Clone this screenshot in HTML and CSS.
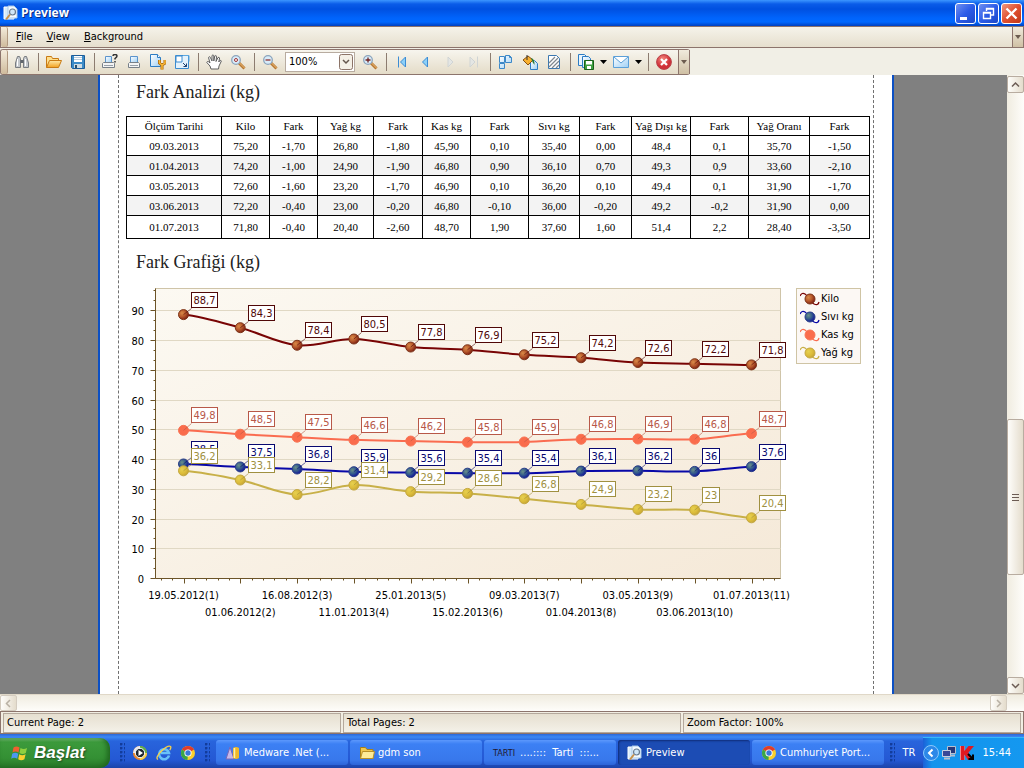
FILE: index.html
```html
<!DOCTYPE html>
<html lang="tr">
<head>
	<meta charset="UTF-8">
	<title>Preview</title>
<link rel="stylesheet" href="styles.css">
</head>
<body>
<svg class="defs" width="0" height="0">
	<defs>
		<linearGradient id="gBlue" x1="0" y1="0" x2="1" y2="1"><stop offset="0" stop-color="#fff"/><stop offset="1" stop-color="#9fd0f5"/></linearGradient>
		<linearGradient id="gFold" x1="0" y1="0" x2="0" y2="1"><stop offset="0" stop-color="#ffe9a8"/><stop offset="1" stop-color="#f2a01e"/></linearGradient>
		<radialGradient id="gRed" cx="0.4" cy="0.3"><stop offset="0" stop-color="#f58a80"/><stop offset="1" stop-color="#d03038"/></radialGradient>
		<radialGradient id="mKilo" cx="0.35" cy="0.35" r="0.7"><stop offset="0" stop-color="#d88a48"/><stop offset="0.5" stop-color="#b85a2c"/><stop offset="1" stop-color="#7a1c10"/></radialGradient>
		<radialGradient id="mSivi" cx="0.35" cy="0.35" r="0.7"><stop offset="0" stop-color="#6a9088"/><stop offset="0.5" stop-color="#345c8c"/><stop offset="1" stop-color="#10109a"/></radialGradient>
		<radialGradient id="mKas"><stop offset="0" stop-color="#fa6c4c"/><stop offset="1" stop-color="#fa6c4c"/></radialGradient>
		<radialGradient id="mYag" cx="0.35" cy="0.35" r="0.7"><stop offset="0" stop-color="#e6d050"/><stop offset="0.6" stop-color="#dcbc3a"/><stop offset="1" stop-color="#c4a438"/></radialGradient>
	</defs>
	<symbol id="preview" viewBox="0 0 16 16">
		<path d="M1 2h8l2 2v10H1z" fill="#d8ecfa" stroke="#fff"/>
		<path d="M5 1h6l3 3v9H5z" fill="#f4faff" stroke="#a8c8e8"/>
		<circle cx="9.500" cy="7" r="3" fill="#cfe6f8" stroke="#6a7c90" stroke-width="1.200"/>
		<path d="M7 9.500l-4 5" stroke="#c89048" stroke-width="2"/>
	</symbol>
	<symbol id="chrome" viewBox="0 0 16 16">
		<circle cx="8" cy="8" r="7" fill="#f8cf2c"/>
		<path d="M8 8L1.900 4.500A7 7 0 0 1 14.100 4.500z" fill="#e03c2c"/>
		<path d="M8 8L1.900 4.500A7 7 0 0 0 7.500 15z" fill="#3aa648"/>
		<circle cx="8" cy="8" r="3.600" fill="#fff"/>
		<circle cx="8" cy="8" r="2.700" fill="#3a78d8"/>
	</symbol>
</svg>

<div class="titlebar">
	<svg class="ico" viewBox="0 0 16 16"><use href="#preview"/></svg>
	<h1>Preview</h1>
	<button class="win" aria-label="Minimize"><svg viewBox="0 0 19 19"><path d="M4 13h7v3H4z" fill="#fff"/></svg></button>
	<button class="win" aria-label="Restore"><svg viewBox="0 0 19 19"><path d="M7.500 7V4.500h7V11H12M7 5h8M4.500 8.500h7v6h-7zM4 9h8" fill="none" stroke="#fff" stroke-width="1.400"/></svg></button>
	<button class="win close" aria-label="Close"><svg viewBox="0 0 19 19"><path d="M4.500 4.500l10 10M14.500 4.500l-10 10" stroke="#fff" stroke-width="2.400"/></svg></button>
</div>

<div class="menubar">
	<span class="grip"></span>
	<button><u>F</u>ile</button>
	<button><u>V</u>iew</button>
	<button><u>B</u>ackground</button>
	<button class="more" aria-label="Menu options"><i class="down"></i></button>
</div>

<div class="toolrow">
<div class="toolbar">
	<span class="grip"></span>
	<button class="tool" aria-label="Search"><svg viewBox="0 0 16 16"><path d="M3.500 2.500h2l1 2v9h-5V9zM12.500 2.500h-2l-1 2v9h5V9z" fill="#c4c8cc" stroke="#787c80"/><path d="M6.500 6h3v3h-3z" fill="#60666c"/><path d="M3.500 5v7M11.500 5v7" stroke="#fff"/></svg></button>
	<span class="sep"></span>
	<button class="tool" aria-label="Open"><svg viewBox="0 0 16 16"><path d="M.5 13.500v-11h5l1 2h6v3" fill="#ffdf8c" stroke="#c87a14"/><path d="M.5 13.500l3-7h12l-3 7z" fill="url(#gFold)" stroke="#c87a14"/></svg></button>
	<button class="tool" aria-label="Save"><svg viewBox="0 0 16 16"><path d="M1.500 1.500h13v13h-12l-1-1z" fill="#3c8cc8" stroke="#1c5c98"/><path d="M4 2h8v6H4z" fill="#fff"/><path d="M4 3.500h8M4 5.500h8" stroke="#b8ccdc"/><path d="M4 10h8v4H4z" fill="#cfdce4"/><path d="M5 11h2v3H5z" fill="#28506c"/></svg></button>
	<span class="sep"></span>
	<button class="tool" aria-label="Print"><svg viewBox="0 0 16 16"><path d="M3.500 8.500v-6h6v6" fill="url(#gBlue)" stroke="#5c94cc"/><path d="M1.500 8.500h10l1 1v4h-12v-4z" fill="#f4f4f4" stroke="#788088"/><path d="M2 11.500h9" stroke="#98a0a8"/><path d="M11 2q0-1.500 2-1.500t2 1.500q0 1-2 2.500v1M13 7v1.500" fill="none" stroke="#333" stroke-width="1.500"/></svg></button>
	<button class="tool" aria-label="Quick print"><svg viewBox="0 0 16 16"><path d="M4.500 8.500v-6h7v6" fill="url(#gBlue)" stroke="#5c94cc"/><path d="M3.500 8.500h9l1 1v4h-11v-4z" fill="#f4f4f4" stroke="#788088"/><path d="M4 11.500h8" stroke="#98a0a8"/></svg></button>
	<button class="tool" aria-label="Page setup"><svg viewBox="0 0 16 16"><path d="M.5.5h7l3 3v9H.5z" fill="url(#gBlue)" stroke="#2c7cc4"/><path d="M7.500.5v3h3" fill="#fff" stroke="#2c7cc4"/><path d="M9.500 6v3l2.500 2 3-2V6M12 11v4.500" fill="none" stroke="#a86408" stroke-width="3"/><path d="M9.500 6v3l2.500 2 3-2V6M12 11v4.500" fill="none" stroke="#f8b838" stroke-width="1.500"/></svg></button>
	<button class="tool" aria-label="Scale"><svg viewBox="0 0 16 16"><path d="M1.500 1.500h13v13h-13z" fill="#e4f2fc" stroke="#3c8cd0"/><path d="M2 2h6v6H2z" fill="#fff" stroke="#3c8cd0"/><path d="M9 1.500h6v6" fill="none" stroke="#5ca8e0"/><path d="M9 9l3.500 3.500M12.500 9.500v3h-3" fill="none" stroke="#1c4070"/></svg></button>
	<span class="sep"></span>
	<button class="tool" aria-label="Hand tool"><svg viewBox="0 0 16 16"><path d="M5 15l-1-3L.8 8.500q.2-1.500 1.800-.8L4 9 2.500 3.500q.5-1.500 1.800-.2L6 7V1.500q1-1.200 1.800 0V7l1-5q1.200-1 1.800.2L10 7.500l2-4q1.200-.6 1.600.5L12.800 8l1-1.500q1.200-.5 1.600.5L13 12l-.5 3z" fill="#fff" stroke="#606060"/></svg></button>
	<button class="tool" aria-label="Magnifier"><svg viewBox="0 0 16 16"><path d="M9 9l5.500 5.500" stroke="#b87830" stroke-width="3"/><path d="M9.500 9l5 5" stroke="#f0c080"/><circle cx="6" cy="6" r="4.300" fill="#d8ecfa" stroke="#8ca4bc" stroke-width="1.300"/><circle cx="6" cy="6" r="1.500" fill="#fff" stroke="#a03030"/></svg></button>
	<span class="sep"></span>
	<button class="tool" aria-label="Zoom out"><svg viewBox="0 0 16 16"><path d="M9 9l5.500 5.500" stroke="#b87830" stroke-width="3"/><path d="M9.500 9l5 5" stroke="#f0c080"/><circle cx="6" cy="6" r="4.300" fill="#d8ecfa" stroke="#8ca4bc" stroke-width="1.300"/><path d="M3.500 6h5" stroke="#903030" stroke-width="1.300"/></svg></button>
	<label class="zoom"><select aria-label="Zoom"><option>100%</option></select><svg viewBox="0 0 14 16"><rect x=".5" y=".5" width="13" height="15" rx="2" fill="#f4f0e6" stroke="#8c7468"/><path d="M4 6l3 3 3-3" fill="none" stroke="#64564c" stroke-width="1.500"/></svg></label>
	<button class="tool" aria-label="Zoom in"><svg viewBox="0 0 16 16"><path d="M9 9l5.500 5.500" stroke="#b87830" stroke-width="3"/><path d="M9.500 9l5 5" stroke="#f0c080"/><circle cx="6" cy="6" r="4.300" fill="#d8ecfa" stroke="#8ca4bc" stroke-width="1.300"/><path d="M3.500 6h5M6 3.500v5" stroke="#702020" stroke-width="1.300"/></svg></button>
	<span class="sep"></span>
	<button class="tool" aria-label="First page"><svg viewBox="0 0 16 16"><path d="M4.500 2.500v11M11.500 3v10L6.500 8z" fill="#8cd0f8" stroke="#3c8cd4"/></svg></button>
	<button class="tool" aria-label="Previous page"><svg viewBox="0 0 16 16"><path d="M9.500 3v10l-5-5z" fill="#8cd0f8" stroke="#3c8cd4"/></svg></button>
	<button class="tool" aria-label="Next page" disabled><svg viewBox="0 0 16 16"><path d="M6 3v10l5-5z" fill="#e4e6e4" stroke="#d0d4d4"/></svg></button>
	<button class="tool" aria-label="Last page" disabled><svg viewBox="0 0 16 16"><path d="M4 3v10l5-5zM11.500 2.500v11" fill="#e4e6e4" stroke="#d0d4d4"/></svg></button>
	<span class="sep"></span>
	<button class="tool" aria-label="Multiple pages"><svg viewBox="0 0 16 16"><path d="M1.500 9.500v5h5v-5zM1.500 2.500h5v6h-5zM7.500 1.500h4l2 2v5h-6z" fill="url(#gBlue)" stroke="#3c88c8"/><path d="M11.500 1.500v2h2" fill="none" stroke="#3c88c8"/></svg></button>
	<button class="tool" aria-label="Background color"><svg viewBox="0 0 16 16"><path d="M8.500 6.500h4l3 3v6h-7z" fill="url(#gBlue)" stroke="#2c7cc4"/><path d="M1 6l5-4 5 4-5 5z" fill="#f8b030" stroke="#885010"/><path d="M5 1v5" stroke="#333"/><path d="M9 4q4 1 3.500 7Q10 8 9 4z" fill="#287838"/></svg></button>
	<button class="tool" aria-label="Watermark"><svg viewBox="0 0 16 16"><path d="M2.500 1.500h8l3 3v10h-11z" fill="#fff" stroke="#3c78b0"/><path d="M3 9l6-6M3 13l9-9M6 14l7-7M10 14l3-3" stroke="#80888f" stroke-width="1.200"/></svg></button>
	<span class="sep"></span>
	<button class="tool" aria-label="Export"><svg viewBox="0 0 16 16"><path d="M.5.500h6l2 2v9h-8z" fill="#e8f4fc" stroke="#2c7cc4"/><path d="M4.500 2.500h6l2 2v9h-8z" fill="url(#gBlue)" stroke="#2c7cc4"/><path d="M6.500 6.500h9v9h-9z" fill="#40a040" stroke="#186018"/><path d="M8 7h6v3.500H8zM9 12h4v3H9z" fill="#fff"/></svg></button>
	<button class="drop" aria-label="Export options"><i class="down"></i></button>
	<button class="tool" aria-label="E-mail"><svg viewBox="0 0 16 16"><path d="M.5 2.500h15v11H.5z" fill="url(#gBlue)" stroke="#5ca0d8"/><path d="M1 3l7 6 7-6" fill="#fff" stroke="#5ca0d8"/></svg></button>
	<button class="drop" aria-label="E-mail options"><i class="down"></i></button>
	<span class="sep"></span>
	<button class="tool" aria-label="Exit"><svg viewBox="0 0 16 16"><circle cx="8" cy="8" r="7.400" fill="url(#gRed)" stroke="#b84048"/><path d="M5 5l6 6M11 5l-6 6" stroke="#fff" stroke-width="2.200"/></svg></button>
	<button class="more" aria-label="Toolbar options"><i class="down"></i></button>
</div>
</div>

<div class="viewer">
	<div class="canvas">
		<div class="paper">
		<div class="area">
			<h2>Fark Analizi (kg)</h2>
			<table>
				<colgroup><col class="w95"><col class="w48"><col class="w48"><col class="w56"><col class="w49"><col class="w48"><col class="w58"><col class="w51"><col class="w52"><col class="w59"><col class="w58"><col class="w61"><col class="w60"></colgroup>
				<thead>
				<tr><th>Ölçüm Tarihi</th><th>Kilo</th><th>Fark</th><th>Yağ kg</th><th>Fark</th><th>Kas kg</th><th>Fark</th><th>Sıvı kg</th><th>Fark</th><th>Yağ Dışı kg</th><th>Fark</th><th>Yağ Oranı</th><th>Fark</th></tr>
				</thead>
				<tbody>
				<tr><td>09.03.2013</td><td>75,20</td><td>-1,70</td><td>26,80</td><td>-1,80</td><td>45,90</td><td>0,10</td><td>35,40</td><td>0,00</td><td>48,4</td><td>0,1</td><td>35,70</td><td>-1,50</td></tr>
				<tr><td>01.04.2013</td><td>74,20</td><td>-1,00</td><td>24,90</td><td>-1,90</td><td>46,80</td><td>0,90</td><td>36,10</td><td>0,70</td><td>49,3</td><td>0,9</td><td>33,60</td><td>-2,10</td></tr>
				<tr><td>03.05.2013</td><td>72,60</td><td>-1,60</td><td>23,20</td><td>-1,70</td><td>46,90</td><td>0,10</td><td>36,20</td><td>0,10</td><td>49,4</td><td>0,1</td><td>31,90</td><td>-1,70</td></tr>
				<tr><td>03.06.2013</td><td>72,20</td><td>-0,40</td><td>23,00</td><td>-0,20</td><td>46,80</td><td>-0,10</td><td>36,00</td><td>-0,20</td><td>49,2</td><td>-0,2</td><td>31,90</td><td>0,00</td></tr>
				<tr><td>01.07.2013</td><td>71,80</td><td>-0,40</td><td>20,40</td><td>-2,60</td><td>48,70</td><td>1,90</td><td>37,60</td><td>1,60</td><td>51,4</td><td>2,2</td><td>28,40</td><td>-3,50</td></tr>
				</tbody>
			</table>
			<h2>Fark Grafiği (kg)</h2>
			<div class="graph">
				<svg id="chart" viewBox="0 0 664 338"></svg>
				<ul id="legend"></ul>
			</div>
		</div>
		</div>
	</div>
	<div class="vscroll">
		<button aria-label="Scroll up"><svg viewBox="0 0 9 9"><path d="M1 6.500L4.500 3 8 6.500"/></svg></button>
		<span></span>
		<button class="thumb" aria-label="Scroll position"><svg viewBox="0 0 9 9"><path d="M1 1.500h7M1 4.500h7M1 7.500h7"/></svg></button>
		<span></span>
		<button aria-label="Scroll down"><svg viewBox="0 0 9 9"><path d="M1 3l3.500 3.500L8 3"/></svg></button>
	</div>
</div>
<div class="hscroll">
	<button aria-label="Scroll left" disabled><svg viewBox="0 0 9 9"><path d="M6 1L2.500 4.500 6 8"/></svg></button>
	<button aria-label="Scroll right" disabled><svg viewBox="0 0 9 9"><path d="M3 1l3.500 3.500L3 8"/></svg></button>
</div>

<div class="status">
	<p>Current Page: 2</p>
	<p>Total Pages: 2</p>
	<p>Zoom Factor: 100%</p>
</div>

<div class="taskbar">
	<button class="start">
		<svg viewBox="0 0 18 18"><path d="M2.500 3.500q3-2 6 0L7.500 8.500q-3-2-6 0z" fill="#f06030"/><path d="M9.500 4q3 2 6.500 0l-1.200 5q-3.300 2-6.300 0z" fill="#90d040"/><path d="M1.200 9.700q3-2 6 0L6.200 14.700q-3-2-6 0z" fill="#4c98f0"/><path d="M8.200 10.200q3 2 6.400 0l-1.200 5q-3.200 2-6.200 0z" fill="#fcd030"/></svg>
		Başlat
	</button>
	<span class="dots"></span>
	<div class="quick">
		<button aria-label="Media Player"><svg viewBox="0 0 16 16"><circle cx="8" cy="8" r="7" fill="#f08828"/><path d="M8 1a7 7 0 0 1 7 7H8z" fill="#58b048"/><path d="M1 8a7 7 0 0 1 7-7v7z" fill="#e8e8f0"/><path d="M15 8a7 7 0 0 1-7 7V8z" fill="#f8d048"/><circle cx="8" cy="8" r="4.700" fill="#202830" stroke="#fff"/><path d="M6.500 5v6l4.500-3z" fill="#fff"/></svg></button>
		<button aria-label="Internet Explorer"><svg viewBox="0 0 16 16"><path d="M13 10.500A5 5 0 1 1 13 8H5" fill="none" stroke="#68c0f8" stroke-width="2.600"/><path d="M2 14.500Q-1 13 5 6.500 12 0 14.500 1.500q1 1-.8 3.500" fill="none" stroke="#f8d048" stroke-width="1.300"/></svg></button>
		<button aria-label="Chrome"><svg viewBox="0 0 16 16"><use href="#chrome"/></svg></button>
	</div>
	<span class="dots"></span>
	<div class="tasks">
		<button class="task"><svg viewBox="0 0 16 16"><path d="M1 14L5 2l4 12z" fill="#c8b8e8" stroke="#7868b8"/><path d="M8 3q3-2 6 0v10q-3 2-6 0z" fill="#f0b828"/><path d="M9.500 3v10" stroke="#fff0a8" stroke-width="1.500"/></svg>Medware .Net (...</button>
		<button class="task"><svg viewBox="0 0 16 16"><path d="M1.500 13.500v-11h5l1.500 2h6v9z" fill="#f0c850" stroke="#a88018"/><path d="M1.500 13.500l2-7h12l-1.500 7z" fill="#fdeb98" stroke="#b89028"/></svg>gdm son</button>
		<button class="task"><span class="tarti">TARTI</span>....::::&nbsp; Tarti &nbsp;:::...</button>
		<button class="task active"><svg viewBox="0 0 16 16"><use href="#preview"/></svg>Preview</button>
		<button class="task"><svg viewBox="0 0 16 16"><use href="#chrome"/></svg>Cumhuriyet Port...</button>
	</div>
	<span class="dots"></span>
	<button class="lang">TR</button>
	<div class="tray">
		<button class="hide" aria-label="Hide icons"><svg viewBox="0 0 16 16"><circle cx="8" cy="8" r="7.500" fill="#2c88e8" stroke="#8cc8fc"/><path d="M9.500 4.500L6 8l3.500 3.500" fill="none" stroke="#fff" stroke-width="2"/></svg></button>
		<svg class="ico" viewBox="0 0 16 16"><path d="M6.500 1.500h8v7h-8z" fill="#283878" stroke="#b8c0d0"/><path d="M1.500 5.500h8v6h-8z" fill="#384898" stroke="#c8d0e0"/><path d="M3 13.500h6M9 10.500h5" stroke="#b8c0d0" stroke-width="2"/></svg>
		<svg class="ico" viewBox="0 0 16 16"><path d="M1 1h4.500v14H1z" fill="#fff"/><path d="M1.500 1h4v5l4-5H15L9.500 7.500 13 15H9L5.500 9.500V15h-4z" fill="#e01820"/><path d="M9 9l4 4M14 9.500V14H9.500" fill="none" stroke="#000" stroke-width="2"/></svg>
		<time>15:44</time>
	</div>
</div>
<script src="chart.js"></script>
</body>
</html>
```

FILE: styles.css
```css
*{margin:0;padding:0;box-sizing:border-box;list-style:none;}
body{display:flex;flex-direction:column;height:100vh;overflow:hidden;background:#f1efe6;color:#000;font:11px/14px "DejaVu Sans Condensed","DejaVu Sans",sans-serif;}
button{border:0;background:none;color:inherit;font:inherit;}
svg{display:block;}
.defs{position:absolute;}
.ico{width:16px;height:16px;flex:none;}

.titlebar{display:flex;align-items:center;gap:2px;flex:none;height:26px;padding:0 2px 0 3px;background:linear-gradient(#3c96ff,#0a5ce8 4px,#0050e0 9px,#0064fc 18px,#0068ff 22px,#0040c0);}
.titlebar h1{flex:1;color:#fff;font:bold 12px/18px "Open Sans",sans-serif;text-shadow:1px 1px #0a2c80;}
.win{width:21px;height:21px;border:1px solid #fff;border-radius:3px;background:linear-gradient(135deg,#7090f0,#2c5ce8 50%,#1c48c8);}
.close{background:linear-gradient(135deg,#f09880,#e05030 50%,#c03818);}

.menubar{display:flex;flex:none;height:22px;border:1px solid #8c746c;border-width:1px 0 1px 1px;background:linear-gradient(#f5f3ea,#e6dfce);}
.menubar button{height:20px;margin-right:14px;}
.grip{flex:none;width:7px;margin-right:8px;border-right:1px solid #b09880;border-radius:2px;background:linear-gradient(#f4ecdc,#cfbb9c);}
.menubar .more,.toolbar .more{width:12px;height:auto;margin:0 0 0 auto;border-left:1px solid #8c746c;border-right:1px solid #8c746c;background:linear-gradient(#f0eadc,#cfc0a4);}
.down{display:block;width:7px;height:4px;margin:auto;background:#000;clip-path:polygon(0 0,100% 0,50% 100%);}
.more .down{width:6px;background:#6c5c50;}

.toolrow{flex:none;height:27px;padding-top:1px;}
.toolbar{display:flex;align-items:center;width:690px;height:26px;border:1px solid #8c746c;border-right:0;border-radius:3px;background:linear-gradient(#f7f5ee,#e4dcc8);}
.toolbar .grip{align-self:stretch;margin-right:2px;}
.tool{flex:none;width:24px;height:22px;padding:3px 4px;}
.tool svg{width:16px;height:16px;}
.sep{flex:none;width:1px;height:18px;margin:0 3px 0 4px;background:#8c7c70;}
.drop{flex:none;width:11px;height:22px;}
.zoom{position:relative;flex:none;width:70px;height:20px;margin:0 3px;}
.zoom select{width:100%;height:20px;padding-left:3px;border:1px solid #b8aca0;border-radius:0;background:#fff;color:#000;font:inherit;appearance:none;}
.zoom svg{position:absolute;top:2px;right:2px;width:14px;height:16px;pointer-events:none;}
.toolbar .more{align-self:stretch;}

.viewer{display:flex;flex:1;min-height:0;}
.canvas{display:flex;flex:1;overflow:hidden;padding:0 113px 0 98px;background:#808080;}
.paper{flex:1;padding:0 18px;border:2px solid #0c50c4;border-width:0 2px;background:#fff;}
.area{display:flex;flex-direction:column;height:100%;padding:0 3px 0 7px;border:1px dashed #707070;border-width:0 1px;}
h2{margin:11px 0 12px 10px;color:#222;font:18px/24px "Liberation Serif",serif;}
.area h2:first-child{margin-top:5px;}

table{width:100%;table-layout:fixed;border-collapse:collapse;font:11px/14px "Liberation Serif",serif;text-align:center;}
th,td{height:20px;border:1px solid #000;white-space:nowrap;}
th{height:19px;font-weight:normal;}
tbody tr:nth-child(even){background:#f3f3f3;}
tbody tr:last-child td{height:23px;}
.w95{width:95px;}
.w61{width:61px;}
.w60{width:60px;}
.w59{width:59px;}
.w58{width:58px;}
.w56{width:56px;}
.w52{width:52px;}
.w51{width:51px;}
.w49{width:49px;}
.w48{width:48px;}

.graph{display:flex;align-items:flex-start;gap:6px;padding-right:9px;}
#chart{flex:1;min-width:0;}
#chart text{font-size:11px;}
.end{text-anchor:end;}
.mid{text-anchor:middle;}
#legend{width:65px;margin-top:2px;padding:1px 3px;border:1px solid #cfc4a4;background:#fcf8f4;}
#legend li{display:flex;align-items:center;height:18px;white-space:nowrap;}
#legend svg{flex:none;width:20px;height:16px;margin-right:1px;}

.vscroll{display:grid;grid-template-rows:17px 326fr 156fr 102fr 17px;width:17px;padding-top:1px;background:linear-gradient(90deg,#f0ece0,#fefdfa);}
.hscroll{display:flex;flex:none;justify-content:space-between;height:17px;padding-right:17px;border-top:1px solid #e0d8c8;background:linear-gradient(#f0ece0,#fefdfa);}
.vscroll button,.hscroll button{display:flex;align-items:center;justify-content:center;width:17px;border:1px solid #b8aca0;border-radius:2px;background:linear-gradient(90deg,#fefdfa,#e4dccc);}
.vscroll svg,.hscroll svg{width:9px;height:9px;fill:none;stroke:#6c5c54;stroke-width:1.500;}
.vscroll .thumb svg{stroke-width:1;}
.hscroll button:disabled{border-color:#d4ccc0;}
.hscroll button:disabled svg{stroke:#b8b0a4;}

.status{display:grid;grid-template-columns:repeat(3,1fr);gap:2px;flex:none;height:23px;padding:1px 2px;border:1px solid #8c746c;background:#f1ede2;}
.status p{padding:2px 3px;border:1px solid #b4a89c;background:linear-gradient(#e6dfd0,#f4f1e8);}

.taskbar{display:flex;align-items:center;flex:none;height:34px;padding-top:3px;background:linear-gradient(#2c68d8,#3c88f4 3px,#2864dc 7px,#2458d4 26px,#1c44a8);color:#fff;}
.start{display:flex;align-items:center;flex:none;gap:5px;width:110px;height:30px;padding:0 0 0 11px;border-radius:0 10px 10px 0;background:linear-gradient(#78b878,#3c9a3c 4px,#349034 20px,#287828);box-shadow:inset -3px -1px 5px #206820;font:italic bold 17px/24px "Liberation Sans",sans-serif;text-shadow:1px 1px 2px #204820;}
.start svg{width:18px;height:18px;}
.dots{flex:none;width:5px;height:20px;margin-left:10px;background:radial-gradient(circle at 1px 1px,#123c9c 1px,transparent 2px) 0 0/4px 4px;}
.quick{display:flex;gap:8px;padding-left:7px;}
.quick button{width:16px;height:16px;}
.quick+.dots{margin:0 6px 0 9px;}
.tasks{display:flex;flex:1;gap:2px;min-width:0;}
.task{display:flex;align-items:center;flex:1;gap:3px;min-width:0;height:25px;padding:0 9px;border-radius:3px;background:linear-gradient(#5c98fc,#3c80f4 4px,#3878ec 20px,#2c64d8);white-space:nowrap;}
.task svg{flex:none;width:16px;height:16px;}
.active{background:#1c4cb4;box-shadow:inset 1px 1px 2px #102c78;}
.tarti{margin-right:2px;color:#201830;font:9px/12px "DejaVu Sans Condensed","DejaVu Sans",sans-serif;}
.tasks+.dots{margin-left:6px;}
.lang{width:28px;}
.tray{display:flex;align-items:center;flex:none;gap:2px;width:101px;height:31px;padding-right:13px;border-top:1px solid #38b8f8;background:linear-gradient(90deg,#1c60d8,#1494ec 9px,#1498f0);}
.hide{width:16px;height:16px;}
.tray time{margin-left:auto;}
```

FILE: chart.js
```js
var dates=['19.05.2012(1)','01.06.2012(2)','16.08.2012(3)','11.01.2013(4)','25.01.2013(5)','15.02.2013(6)','09.03.2013(7)','01.04.2013(8)','03.05.2013(9)','03.06.2013(10)','01.07.2013(11)'];
var series=[
	{name:'Kilo',line:'#780404',mark:'mKilo',edge:'#7c3418',text:'#500808',data:[88.7,84.3,78.4,80.5,77.8,76.9,75.2,74.2,72.6,72.2,71.8]},
	{name:'Sıvı kg',line:'#0808a8',mark:'mSivi',edge:'#283c88',text:'#080870',data:[38.5,37.5,36.8,35.9,35.6,35.4,35.4,36.1,36.2,36,37.6]},
	{name:'Kas kg',line:'#fa6c50',mark:'mKas',edge:'#f87454',text:'#b85848',data:[49.8,48.5,47.5,46.6,46.2,45.8,45.9,46.8,46.9,46.8,48.7]},
	{name:'Yağ kg',line:'#c8b048',mark:'mYag',edge:'#c4a840',text:'#a09040',data:[36.2,33.1,28.2,31.4,29.2,28.6,26.8,24.9,23.2,23,20.4]}
];
var L=29.5,R=654.5,T=2.5,B=292.5;

function px(i){return 57.5+56.8*i;}
function py(v){return B-2.975*v;}
function line(x1,y1,x2,y2,c){
	return '<path d="M'+x1+' '+y1+'L'+x2+' '+y2+'" stroke="'+c+'"/>';
}
// smooth line through all points
function spline(d){
	var s='M'+px(0)+' '+py(d[0]);
	for(var i=0;i<d.length-1;i++){
		var a=d[Math.max(i-1,0)],b=d[i],c=d[i+1],e=d[Math.min(i+2,d.length-1)];
		s+='C'+(px(i)+19)+' '+py(b+(c-a)/6)+' '+(px(i+1)-19)+' '+py(c-(e-b)/6)+' '+px(i+1)+' '+py(c);
	}
	return s;
}

var out='<defs><linearGradient id="plot" x1="0" y1="0" x2="1" y2="1"><stop offset="0" stop-color="#fcf9f2"/><stop offset="1" stop-color="#f5e9d8"/></linearGradient></defs>';
out+='<rect x="'+L+'" y="'+T+'" width="'+(R-L)+'" height="'+(B-T)+'" fill="url(#plot)" stroke="#cfc4a8"/>';
for(var v=0;v<=90;v+=10){
	var y=Math.floor(py(v))+0.5;
	if(v)out+=line(L,y,R,y,'#e0d8c4');
	out+=line(L-5,y,L,y,'#6c5428');
	out+='<text class="end" x="18" y="'+(y+4)+'">'+v+'</text>';
}
for(var m=1;m<30;m++){
	if(m%3)out+=line(L-2,Math.floor(py(m*10/3))+0.5,L,Math.floor(py(m*10/3))+0.5,'#6c5428');
}
for(var k=-2;k<=52;k++){
	var x=Math.floor(58+k*11.36)+0.5;
	out+=line(x,B,x,k%5?B+2:B+5,'#6c5428');
}
out+=line(L,T,L,B,'#6c5428')+line(L,B,R,B,'#6c5428');
dates.forEach(function(d,i){
	out+='<text class="mid" x="'+px(i)+'" y="'+(i%2?330:313)+'">'+d+'</text>';
});
series.forEach(function(s){
	out+='<path d="'+spline(s.data)+'" fill="none" stroke="'+s.line+'" stroke-width="2"/>';
	s.data.forEach(function(v,i){
		out+='<circle cx="'+px(i)+'" cy="'+py(v)+'" r="5" fill="url(#'+s.mark+')" stroke="'+s.edge+'"/>';
	});
});
series.forEach(function(s){
	s.data.forEach(function(v,i){
		var t=String(v).replace('.',','),x=Math.floor(px(i))+8.5,y=Math.round(py(v))-22.5,w=t.length>2?26:17;
		out+='<g stroke-opacity=".6">'+line(px(i),py(v),x,y+16,s.text)+'</g>';
		out+='<rect x="'+x+'" y="'+y+'" width="'+w+'" height="15" fill="#fff" stroke="'+s.text+'"/>';
		out+='<text class="mid" x="'+(x+w/2)+'" y="'+(y+11.5)+'" fill="'+s.text+'">'+t+'</text>';
	});
});
document.getElementById('chart').innerHTML=out;

document.getElementById('legend').innerHTML=series.map(function(s){
	return '<li><svg viewBox="0 0 20 16"><path d="M0 5q2-4 5-2t4 5 5 5 5-2" fill="none" stroke="'+s.line+'" stroke-width="1.3"/><circle cx="10" cy="8" r="5" fill="url(#'+s.mark+')" stroke="'+s.edge+'"/></svg>'+s.name+'</li>';
}).join('');
```
